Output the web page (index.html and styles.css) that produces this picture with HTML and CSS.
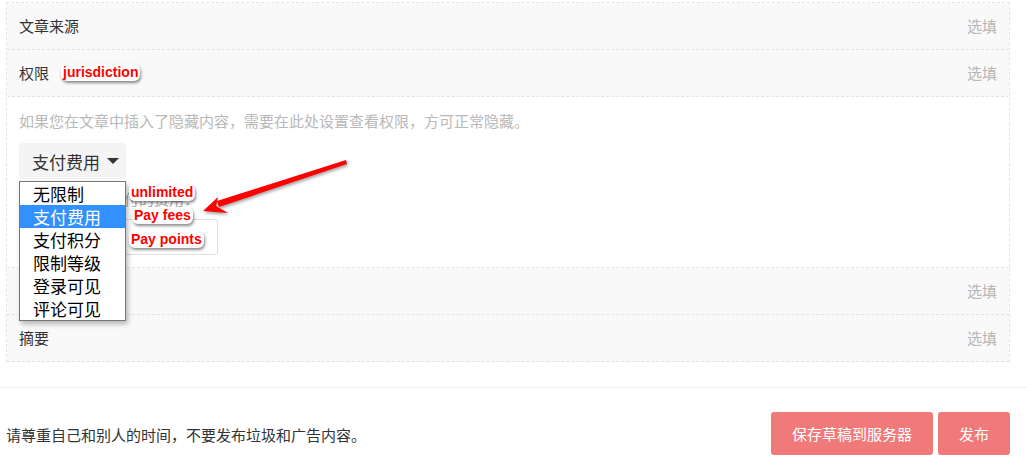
FILE: index.html
```html
<!DOCTYPE html>
<html lang="zh-CN">
<head>
<meta charset="utf-8">
<title>发布文章</title>
<link rel="stylesheet" href="styles.css">
</head>
<body>
<div class="page">
  <div class="card">
    <div class="row"><span class="label">文章来源</span><span class="opt">选填</span></div>
    <div class="row"><span class="label">权限</span><span class="opt">选填</span></div>
    <div class="panel">
      <p class="hint">如果您在文章中插入了隐藏内容，需要在此处设置查看权限，方可正常隐藏。</p>
      <div class="select"><span>支付费用</span><span class="caret"></span></div>
      <p class="fee-label">隐藏内容需要支付的费用：</p>
      <div class="input"></div>
    </div>
    <div class="row"><span class="label">标签</span><span class="opt">选填</span></div>
    <div class="row"><span class="label">摘要</span><span class="opt">选填</span></div>
  </div>
  <div class="footer">
    <p class="notice">请尊重自己和别人的时间，不要发布垃圾和广告内容。</p>
    <div class="actions">
      <button class="btn btn-wide">保存草稿到服务器</button>
      <button class="btn">发布</button>
    </div>
  </div>

  <ul class="dropdown">
    <li>无限制</li>
    <li class="active">支付费用</li>
    <li>支付积分</li>
    <li>限制等级</li>
    <li>登录可见</li>
    <li>评论可见</li>
  </ul>

  <span class="note note-jur">jurisdiction</span>
  <span class="note note-unl">unlimited</span>
  <span class="note note-fee">Pay fees</span>
  <span class="note note-pts">Pay points</span>

  <svg class="arrow" width="160" height="72" viewBox="0 0 160 72">
    <polygon points="151,10 152,14 24,57 22,51" fill="#f00"/>
    <polygon points="8,61 23,47 21,56 33,63" fill="#f00"/>
  </svg>
</div>
</body>
</html>
```

FILE: styles.css
```css
* { box-sizing: border-box; }
html, body { margin: 0; padding: 0; background: #fff; }
body {
  font-family: "Noto Sans CJK SC", "Noto Sans", sans-serif;
  font-size: 15px;
  color: #333;
  width: 1027px;
  height: 463px;
  overflow: hidden;
}
.page { position: relative; width: 1027px; height: 463px; padding-top: 2px; }

.card {
  margin: 0 17px 0 6px;
  border: 1px dashed #e4e4e4;
  border-bottom: none;
}
.row {
  height: 47px;
  background: #f9f9f9;
  border-bottom: 1px dashed #e4e4e4;
  display: flex;
  align-items: center;
  justify-content: space-between;
  padding: 0 12px;
  line-height: 20px;
}
.label { color: #333; }
.opt { color: #b5b5b5; }

.panel {
  background: #fff;
  border-bottom: 1px dashed #e4e4e4;
  padding: 13px 12px 13px;
  height: 171px;
}
.hint { margin: 0; color: #b8b8b8; line-height: 21px; }
.select {
  margin-top: 12px;
  width: 107px;
  height: 36px;
  background: #f4f4f4;
  border-radius: 4px;
  display: flex;
  align-items: center;
  padding-left: 13px;
  font-size: 17px;
  color: #333;
}
.caret {
  margin-left: 7px;
  width: 0; height: 0;
  border-left: 6px solid transparent;
  border-right: 6px solid transparent;
  border-top: 6px solid #333;
}
.fee-label { margin: 9px 0 0; line-height: 21px; color: #aaa; }
.input {
  margin-top: 10px;
  width: 199px;
  height: 36px;
  border: 1px solid #ddd;
  border-radius: 3px;
  background: #fff;
}

.footer {
  margin-top: 25px;
  border-top: 1px solid #eee;
  padding: 24px 17px 0 6px;
  display: flex;
  justify-content: space-between;
  align-items: center;
}
.notice { margin: 0; color: #333; line-height: 21px; padding-top: 1px; }
.actions { display: flex; gap: 5px; }
.btn {
  height: 43px;
  border: none;
  border-radius: 3px;
  background: #f07a7a;
  color: #fff;
  font-family: "Noto Sans CJK SC", "Noto Sans", sans-serif;
  font-size: 15px;
  padding: 0 21px;
  width: 72px;
}
.btn-wide { width: 162px; }

.dropdown {
  position: absolute;
  left: 19px;
  top: 181px;
  width: 107px;
  margin: 0;
  padding: 0;
  list-style: none;
  background: #fff;
  border: 1px solid #767676;
  box-shadow: 2px 3px 5px rgba(0,0,0,.28);
  font-size: 17px;
  color: #000;
}
.dropdown li { height: 23px; line-height: 23px; padding-left: 13px; }
.dropdown li.active { background: #3390ff; color: #fff; }

.note {
  position: absolute;
  font-family: "Liberation Sans", Arial, sans-serif;
  font-weight: bold;
  font-size: 14px;
  line-height: 17px;
  padding: 0 2px;
  color: #f00;
  background: #fff;
  border-radius: 6px;
  box-shadow: 1px 2px 3px rgba(0,0,0,.45);
}
.note-jur { left: 61px; top: 64px; }
.note-unl { left: 129px; top: 184px; }
.note-fee { left: 132px; top: 207px; }
.note-pts { left: 129px; top: 231px; }

.arrow {
  position: absolute;
  left: 195px;
  top: 150px;
  filter: drop-shadow(1px 2px 1.5px rgba(0,0,0,.35));
}
```
